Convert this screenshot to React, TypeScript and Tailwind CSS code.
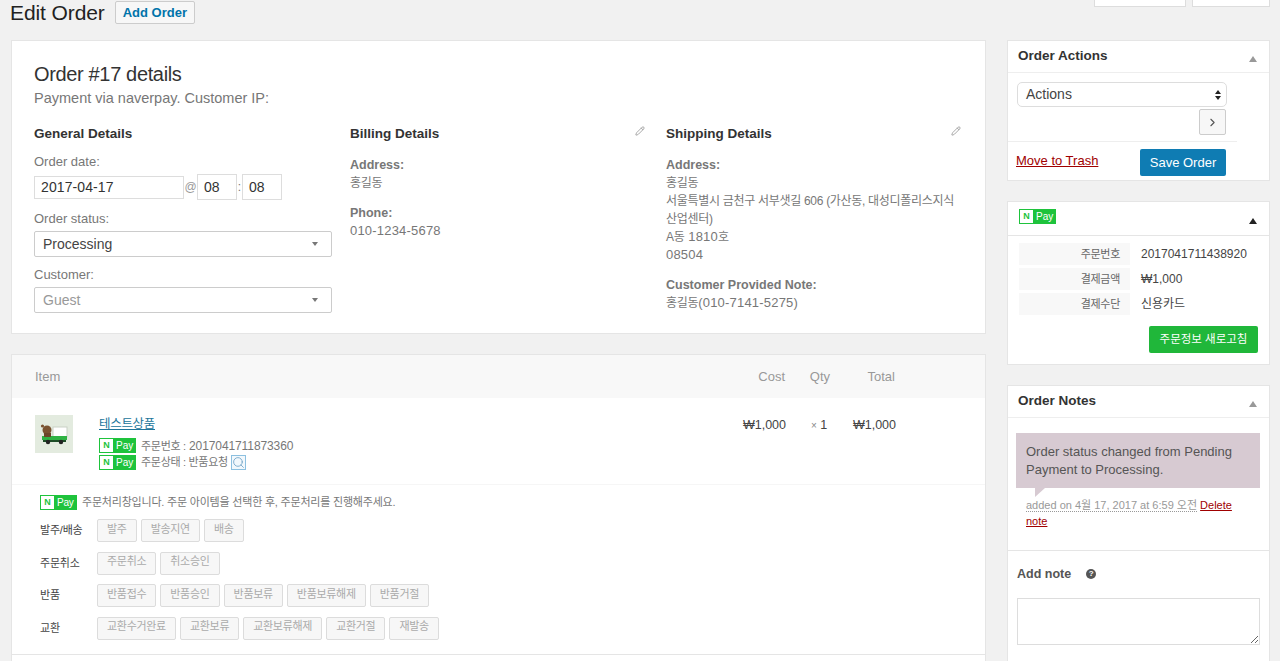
import { ChevronRight, Pencil, Search } from "lucide-react";

function PayBadge() {
  return (
    <span className="inline-flex items-center bg-[#1ec33c] h-[15px] w-[37px] shrink-0 text-white text-[10px] leading-none pl-[1px]">
      <span className="w-[13px] h-[13px] bg-white text-[#1ec33c] text-[9px] font-bold flex items-center justify-center">N</span>
      <span className="ml-[3px]">Pay</span>
    </span>
  );
}

function Truck() {
  return (
    <svg width="38" height="38" viewBox="0 0 38 38" className="shrink-0 bg-[#e3ebdf]">
      <rect x="18" y="12" width="14" height="10" fill="#ffffff" stroke="#c9d1c6" />
      <rect x="7" y="21" width="25" height="4" fill="#2fb344" />
      <rect x="8" y="25" width="23" height="2" fill="#1c4d26" />
      <circle cx="13" cy="27" r="2.2" fill="#222" />
      <circle cx="26" cy="27" r="2.2" fill="#222" />
      <circle cx="12" cy="15" r="4.5" fill="#7a5230" />
      <circle cx="7.5" cy="11" r="1.6" fill="#7a5230" />
      <rect x="9" y="18" width="7" height="4" fill="#6b4528" />
    </svg>
  );
}

function ActionButton({ label }: { label: string }) {
  return (
    <span className="h-[23px] px-[9px] flex items-center bg-[#f7f7f7] border border-[#dcdcdc] rounded-[2px] text-[#aaaaaa] text-[11px] tracking-[-0.3px] leading-none pb-[3px]">
      {label}
    </span>
  );
}

function ActionRow({ title, buttons }: { title: string; buttons: string[] }) {
  return (
    <div className="flex items-center h-[23px] mb-[9.6px]">
      <span className="w-[57px] text-[11px] tracking-[-0.2px] text-[#444444] shrink-0">{title}</span>
      <div className="flex gap-[4px]">
        {buttons.map((b) => (
          <ActionButton key={b} label={b} />
        ))}
      </div>
    </div>
  );
}

function Caret({ dark }: { dark?: boolean }) {
  return <span className={`w-0 h-0 border-l-[4px] border-r-[4px] border-b-[6px] border-l-transparent border-r-transparent ${dark ? "border-b-[#222222]" : "border-b-[#999999]"}`} />;
}

function BoxHead({ title }: { title: string }) {
  return (
    <div className="h-[32px] pl-[10px] pr-[12px] flex items-center justify-between border-b border-[#eeeeee]">
      <span className="text-[13.5px] font-bold text-[#333333]">{title}</span>
      <span className="pt-[4px] flex"><Caret /></span>
    </div>
  );
}

function Field({ label, value, muted }: { label: string; value: string; muted?: boolean }) {
  return (
    <div className="mb-[9px]">
      <div className="text-[13px] text-[#777777] leading-[18px] mb-[3px]">{label}</div>
      <div className={`h-[26px] border border-[#cccccc] rounded-[2px] flex items-center justify-between pl-[8px] pr-[13px] text-[14px] ${muted ? "text-[#999999]" : "text-[#444444]"}`}>
        {value}
        <span className="w-0 h-0 border-l-[3.5px] border-r-[3.5px] border-t-[4px] border-l-transparent border-r-transparent border-t-[#777777]" />
      </div>
    </div>
  );
}

// korean runs are tighter than the latin text around them
function Ko({ children }: { children: string }) {
  return <span className="text-[12px] tracking-[-0.3px]">{children}</span>;
}

export default function App() {
  return (
    <div className="h-[661px] overflow-hidden bg-[#f1f1f1] pl-[11px] pr-[10px] font-['Liberation_Sans','Noto_Sans_CJK_KR',sans-serif] text-[#777777]">
      <div className="h-[40px] flex items-start justify-between">
        <div className="flex items-center h-[25px]">
          <h1 className="text-[21px] text-[#222222] leading-[25px] -ml-[1px] tracking-[-0.1px]">Edit Order</h1>
          <span className="ml-[10px] h-[23px] px-[7px] flex items-center bg-[#f7f7f7] border border-[#cccccc] rounded-[2px] text-[#0073aa] text-[13px] font-bold">Add Order</span>
        </div>
        <div className="flex gap-[6px]">
          <div className="w-[92px] h-[7px] bg-white border border-t-0 border-[#dddddd]" />
          <div className="w-[78px] h-[7px] bg-white border border-t-0 border-[#dddddd]" />
        </div>
      </div>

      <div className="flex gap-[21px] items-start">
        <div className="w-[975px] shrink-0">
          <div className="h-[294px] bg-white border border-[#e5e5e5] pl-[22px] pr-[26px] pt-[21px]">
            <h2 className="text-[20px] leading-[24px] text-[#333333] tracking-[-0.35px]">Order #17 details</h2>
            <p className="text-[14.5px] leading-[22px] text-[#777777] mt-[1px]">Payment via naverpay. Customer IP:</p>
            <div className="flex mt-[16px]">
              <div className="w-[298px] shrink-0">
                <h3 className="text-[13.5px] font-bold text-[#333333] leading-[18px] mb-[10px]">General Details</h3>
                <div className="text-[13px] leading-[18px] mb-[3px]">Order date:</div>
                <div className="flex items-center mb-[10px]">
                  <span className="w-[150px] h-[23px] border border-[#dddddd] flex items-center pl-[6px] text-[14px] text-[#333333] tracking-[0.1px]">2017-04-17</span>
                  <span className="w-[13px] text-center text-[12px] text-[#999999]">@</span>
                  <span className="w-[40px] h-[26px] border border-[#dddddd] flex items-center pl-[6px] text-[14px] text-[#333333]">08</span>
                  <span className="w-[5px] text-center text-[12px]">:</span>
                  <span className="w-[40px] h-[26px] border border-[#dddddd] flex items-center pl-[6px] text-[14px] text-[#333333]">08</span>
                </div>
                <Field label="Order status:" value="Processing" />
                <Field label="Customer:" value="Guest" muted />
              </div>

              <div className="w-[295px] shrink-0 ml-[18px]">
                <div className="flex justify-between items-start">
                  <h3 className="text-[13.5px] font-bold text-[#333333] leading-[18px]">Billing Details</h3>
                  <Pencil size={10} className="mt-[1px] text-[#999999]" />
                </div>
                <div className="text-[13px] leading-[18px] mt-[13px] tracking-[0.2px]">
                  <div className="font-bold text-[12.5px] tracking-normal">Address:</div>
                  <div><Ko>홍길동</Ko></div>
                  <div className="font-bold text-[12.5px] tracking-normal mt-[12px]">Phone:</div>
                  <div>010-1234-5678</div>
                </div>
              </div>

              <div className="w-[295px] shrink-0 ml-[21px]">
                <div className="flex justify-between items-start">
                  <h3 className="text-[13.5px] font-bold text-[#333333] leading-[18px]">Shipping Details</h3>
                  <Pencil size={10} className="mt-[1px] text-[#999999]" />
                </div>
                <div className="text-[13px] leading-[18px] mt-[13px] tracking-[0.2px]">
                  <div className="font-bold text-[12.5px] tracking-normal">Address:</div>
                  <div><Ko>홍길동</Ko></div>
                  <div className="whitespace-nowrap"><Ko>서울특별시 금천구 서부샛길 606 (가산동, 대성디폴리스지식</Ko></div>
                  <div><Ko>산업센터)</Ko></div>
                  <div><Ko>A동</Ko> 1810<Ko>호</Ko></div>
                  <div>08504</div>
                  <div className="font-bold text-[12.5px] tracking-normal mt-[12px]">Customer Provided Note:</div>
                  <div><Ko>홍길동</Ko>(010-7141-5275)</div>
                </div>
              </div>
            </div>
          </div>

          <div className="mt-[20px] bg-white border border-[#e5e5e5]">
            <div className="h-[43px] bg-[#f8f8f8] flex items-center pt-[1px] text-[13px] text-[#999999]">
              <span className="ml-[23px] flex-1">Item</span>
              <span className="w-[50px] text-right">Cost</span>
              <span className="w-[45px] text-right">Qty</span>
              <span className="w-[65px] text-right mr-[90px]">Total</span>
            </div>
            <div className="h-[87px] flex items-start pl-[23px] pt-[17px] border-b border-[#f6f6f6]">
              <Truck />
              <div className="ml-[26px] flex-1 -mt-[1px]">
                <div className="text-[12.5px] tracking-[-0.3px] leading-[20px] text-[#21759b] underline">테스트상품</div>
                <div className="mt-[3px] flex items-center gap-[5px] h-[17px]">
                  <PayBadge />
                  <span className="text-[12px] tracking-[-0.1px]"><span className="text-[11px] tracking-[-0.3px]">주문번호 :</span> 2017041711873360</span>
                </div>
                <div className="flex items-center gap-[5px] h-[17px]">
                  <PayBadge />
                  <span className="text-[11px] tracking-[-0.3px]">주문상태 : 반품요청</span>
                  <span className="-ml-[2px] w-[15px] h-[15px] border border-[#8cc0e0] bg-[#f2f8fc] flex items-center justify-center"><Search size={13} strokeWidth={1.5} className="text-[#6a9fc4]" /></span>
                </div>
              </div>
              <div className="flex text-[12.5px] text-[#444444] leading-[20px]">
                <span className="w-[60px] text-right">₩1,000</span>
                <span className="w-[66px] pl-[25px] whitespace-nowrap"><span className="text-[10px] text-[#888888]">×</span> 1</span>
                <span className="w-[44px] text-right mr-[89px]">₩1,000</span>
              </div>
            </div>
            <div className="h-[169px] pl-[28px] pt-[10px]">
              <div className="flex items-center gap-[5px] h-[15px] text-[11px] tracking-[-0.2px] mb-[9px]"><PayBadge /> 주문처리창입니다. 주문 아이템을 선택한 후, 주문처리를 진행해주세요.</div>
              <ActionRow title="발주/배송" buttons={["발주", "발송지연", "배송"]} />
              <ActionRow title="주문취소" buttons={["주문취소", "취소승인"]} />
              <ActionRow title="반품" buttons={["반품접수", "반품승인", "반품보류", "반품보류해제", "반품거절"]} />
              <ActionRow title="교환" buttons={["교환수거완료", "교환보류", "교환보류해제", "교환거절", "재발송"]} />
            </div>
            <div className="h-[40px] border-t border-[#e5e5e5]" />
          </div>
        </div>

        <div className="w-[263px] shrink-0 flex flex-col gap-[20px]">
          <div className="h-[141px] bg-white border border-[#e5e5e5]">
            <BoxHead title="Order Actions" />
            <div className="pl-[9px] pt-[9px] w-[229px] h-[69px] border-b border-[#eeeeee]">
              <div className="w-[210px] h-[25px] border border-[#dddddd] rounded-[5px] flex items-center justify-between pl-[8px] pr-[5px] text-[14px] text-[#444444]">
                Actions
                <span className="flex flex-col gap-[2px]">
                  <span className="w-0 h-0 border-l-[3px] border-r-[3px] border-b-[4px] border-l-transparent border-r-transparent border-b-[#222222]" />
                  <span className="w-0 h-0 border-l-[3px] border-r-[3px] border-t-[4px] border-l-transparent border-r-transparent border-t-[#222222]" />
                </span>
              </div>
              <div className="flex justify-end w-[209px] mt-[2px]">
                <span className="w-[27px] h-[26px] bg-[#f7f7f7] border border-[#cccccc] rounded-[2px] flex items-center justify-center"><ChevronRight size={13} className="text-[#555555]" /></span>
              </div>
            </div>
            <div className="flex items-start pl-[8px] pt-[7px]">
              <span className="w-[124px] text-[13px] leading-[20px] text-[#a00000] underline mt-[2px]">Move to Trash</span>
              <span className="w-[86px] h-[27px] bg-[#0f7cb3] rounded-[2px] text-white text-[13px] flex items-center justify-center">Save Order</span>
            </div>
          </div>

          <div className="h-[164px] bg-white border border-[#e5e5e5]">
            <div className="h-[34px] pl-[11px] pr-[12px] pt-[7px] flex justify-between border-b border-[#e5e5e5]">
              <PayBadge />
              <span className="pt-[9px] flex items-start"><Caret dark /></span>
            </div>
            <div className="pl-[11px] pt-[7px] text-[12px] text-[#444444]">
              {[["주문번호", "2017041711438920"], ["결제금액", "₩1,000"], ["결제수단", "신용카드"]].map(([k, v]) => (
                <div key={k} className="flex h-[25px]">
                  <span className="w-[111px] h-[22px] bg-[#f8f8f8] text-right pr-[10px] leading-[22px] text-[#666666] text-[11px] tracking-[-0.3px]">{k}</span>
                  <span className="ml-[11px] leading-[22px]">{v}</span>
                </div>
              ))}
            </div>
            <div className="flex justify-end pr-[11px] mt-[8px]">
              <span className="w-[109px] h-[27px] bg-[#20b73a] rounded-[2px] text-white text-[11.5px] flex items-center justify-center">주문정보 새로고침</span>
            </div>
          </div>

          <div className="bg-white border border-[#e5e5e5] h-[300px]">
            <BoxHead title="Order Notes" />
            <div className="h-[133px] pl-[8px] pr-[9px] pt-[15px] border-b border-[#e5e5e5]">
              <div className="relative bg-[#d7cad2] h-[55px] px-[10px] pt-[10px] text-[13px] leading-[18px] text-[#555555]">
                Order status changed from Pending Payment to Processing.
                <span className="absolute left-[19px] top-[55px] w-0 h-0 border-r-[10px] border-t-[9px] border-r-transparent border-t-[#d7cad2]" />
              </div>
              <div className="pl-[10px] mt-[9px] text-[11px] leading-[16px] text-[#999999] pr-[25px]">
                <span className="border-b border-dotted border-[#999999]">added on 4월 17, 2017 at 6:59 오전</span>{" "}
                <span className="text-[#a00000] underline">Delete note</span>
              </div>
            </div>
            <div className="pl-[9px] pt-[14px]">
              <div className="flex items-center text-[12.5px] font-bold text-[#555555] h-[18px]">
                Add note
                <span className="ml-[15px] w-[10px] h-[10px] rounded-full bg-[#555555] text-white text-[8px] font-bold leading-none flex items-center justify-center">?</span>
              </div>
              <textarea readOnly className="block mt-[15px] w-[243px] h-[47px] border border-[#dddddd] outline-none" />
            </div>
          </div>
        </div>
      </div>
    </div>
  );
}
